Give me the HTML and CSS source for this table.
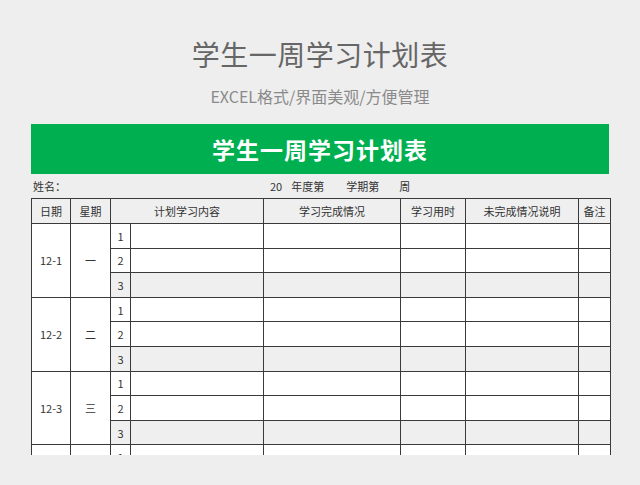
FILE: index.html
```html
<!DOCTYPE html>
<html lang="zh-CN">
<head>
<meta charset="utf-8">
<title>学生一周学习计划表</title>
<link rel="stylesheet" href="styles.css">
</head>
<body>
<header class="intro">
  <h1 class="intro-title">学生一周学习计划表</h1>
  <p class="intro-sub">EXCEL格式/界面美观/方便管理</p>
</header>
<div class="viewport">
  <div class="sheet">
    <div class="sheet-title">学生一周学习计划表</div>
    <div class="info">
      <span class="info-name">姓名：</span>
      <span class="info-term"><span>20</span><span class="gap1">年度第</span><span class="gap2">学期第</span><span class="gap3">周</span></span>
    </div>
    <table class="grid">
      <colgroup>
        <col class="c-date"><col class="c-week"><col class="c-num"><col class="c-plan"><col class="c-done"><col class="c-time"><col class="c-undone"><col class="c-note">
      </colgroup>
      <thead>
        <tr class="head">
          <th>日期</th><th>星期</th><th colspan="2">计划学习内容</th><th>学习完成情况</th><th>学习用时</th><th>未完成情况说明</th><th>备注</th>
        </tr>
      </thead>
      <tbody>
        <tr><td rowspan="3">12-1</td><td rowspan="3">一</td><td class="num">1</td><td></td><td></td><td></td><td></td><td></td></tr>
        <tr><td class="num">2</td><td></td><td></td><td></td><td></td><td></td></tr>
        <tr class="alt"><td class="num">3</td><td></td><td></td><td></td><td></td><td></td></tr>
        <tr><td rowspan="3">12-2</td><td rowspan="3">二</td><td class="num">1</td><td></td><td></td><td></td><td></td><td></td></tr>
        <tr><td class="num">2</td><td></td><td></td><td></td><td></td><td></td></tr>
        <tr class="alt"><td class="num">3</td><td></td><td></td><td></td><td></td><td></td></tr>
        <tr><td rowspan="3">12-3</td><td rowspan="3">三</td><td class="num">1</td><td></td><td></td><td></td><td></td><td></td></tr>
        <tr><td class="num">2</td><td></td><td></td><td></td><td></td><td></td></tr>
        <tr class="alt"><td class="num">3</td><td></td><td></td><td></td><td></td><td></td></tr>
        <tr><td rowspan="3">12-4</td><td rowspan="3">四</td><td class="num">1</td><td></td><td></td><td></td><td></td><td></td></tr>
        <tr><td class="num">2</td><td></td><td></td><td></td><td></td><td></td></tr>
        <tr class="alt"><td class="num">3</td><td></td><td></td><td></td><td></td><td></td></tr>
      </tbody>
    </table>
  </div>
</div>
</body>
</html>
```

FILE: styles.css
```css
html, body {
  margin: 0;
  padding: 0;
  background: #eeeeee;
  font-family: "Noto Sans CJK SC", "Noto Sans", sans-serif;
  color: #333;
}

.intro {
  padding-top: 36px;
  text-align: center;
}

.intro-title {
  margin: 0;
  font-size: 28px;
  line-height: 37px;
  font-weight: normal;
  color: #666;
  letter-spacing: 0.5px;
}

.intro-sub {
  margin: 12px 0 0;
  font-size: 16px;
  line-height: 22px;
  color: #8a8a8a;
}

.viewport {
  margin: 17px 0 0 31px;
  width: 580px;
  height: 331px;
  overflow: hidden;
}

.sheet {
  width: 579px;
}

.sheet-title {
  width: 578px;
  height: 50px;
  background: #00b050;
  color: #fff;
  font-size: 23px;
  font-weight: bold;
  line-height: 50px;
  text-align: center;
  letter-spacing: 1px;
}

.info {
  height: 24px;
  display: flex;
  align-items: center;
  font-size: 11px;
  color: #333;
}

.info-name {
  margin-left: 2px;
  width: 237px;
}

.info-term .gap1 { margin-left: 9px; }
.info-term .gap2 { margin-left: 22px; }
.info-term .gap3 { margin-left: 20px; }

.grid {
  border-collapse: collapse;
  table-layout: fixed;
  width: 579px;
  font-size: 11px;
  color: #333;
}

.c-date { width: 39px; }
.c-week { width: 40px; }
.c-num { width: 20px; }
.c-plan { width: 133px; }
.c-done { width: 137px; }
.c-time { width: 65px; }
.c-undone { width: 113px; }
.c-note { width: 32px; }

.grid th,
.grid td {
  border: 1px solid #3a3a3a;
  padding: 0;
  text-align: center;
  vertical-align: middle;
  background: #fff;
}

.grid .head th {
  height: 24px;
  font-weight: normal;
  background: #efefef;
}

.grid tbody tr {
  height: 24.6px;
}

.grid .alt td {
  background: #efefef;
}

.grid td.num {
  font-size: 11px;
}
```
